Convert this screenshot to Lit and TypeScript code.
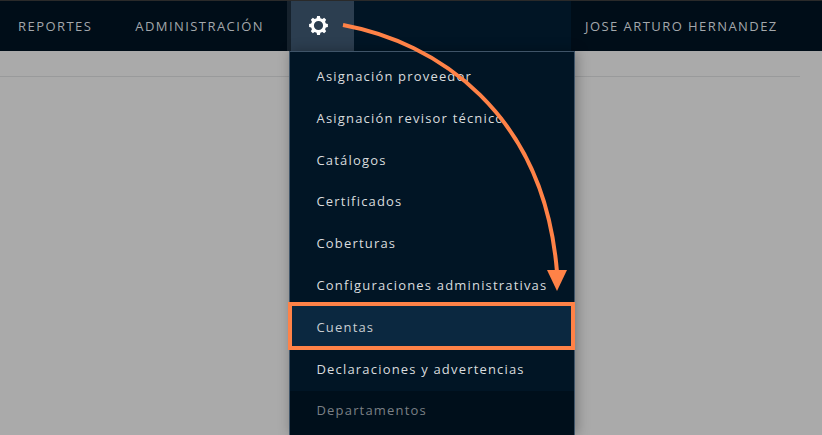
import { LitElement, html, css } from "lit";
import { customElement } from "lit/decorators.js";

const ITEMS = [
  "Asignación proveedor",
  "Asignación revisor técnico",
  "Catálogos",
  "Certificados",
  "Coberturas",
  "Configuraciones administrativas",
  "Cuentas",
  "Declaraciones y advertencias",
  "Departamentos",
];

function gearPath(teeth: number, outer: number, root: number, hole: number): string {
  const pts: string[] = [];
  const step = (Math.PI * 2) / teeth;
  for (let i = 0; i < teeth; i++) {
    const a = i * step - Math.PI / 2;
    const corners: [number, number][] = [
      [root, a - step * 0.32],
      [outer, a - step * 0.19],
      [outer, a + step * 0.19],
      [root, a + step * 0.32],
    ];
    for (const [r, t] of corners) {
      pts.push(`${(12 + r * Math.cos(t)).toFixed(2)} ${(12 + r * Math.sin(t)).toFixed(2)}`);
    }
  }
  return `M${pts.join("L")}ZM12 ${12 - hole}a${hole} ${hole} 0 1 0 0 ${hole * 2}a${hole} ${hole} 0 1 0 0 ${-hole * 2}Z`;
}

@customElement("app-root")
export class AppRoot extends LitElement {
  static styles = css`
    :host {
      display: block;
      position: relative;
      width: 822px;
      height: 435px;
      overflow: hidden;
      background: #aaaaaa;
      font-family: "Open Sans", sans-serif;
    }
    .bar {
      display: flex;
      height: 50px;
      border-top: 1px solid #2a2a2a;
      background: #000d18;
      color: #a3a7ab;
      font-size: 13px;
      font-weight: 400;
      letter-spacing: 1.44px;
    }
    .left {
      width: 287px;
      display: flex;
      gap: 43px;
      align-items: center;
      padding-left: 18px;
      box-sizing: border-box;
      padding-bottom: 1px;
    }
    .sep {
      width: 4px;
      background: #16222d;
    }
    .mid {
      width: 280px;
      background: #011525;
      display: flex;
    }
    .gear {
      width: 63px;
      background: #2c3e50;
      display: flex;
      align-items: center;
      padding-left: 18px;
      box-sizing: border-box;
    }
    .gear svg {
      width: 19px;
      height: 19px;
      display: block;
      margin-bottom: 1px;
    }
    .user {
      flex: 1;
      padding-left: 14px;
      display: flex;
      align-items: center;
      padding-bottom: 1px;
    }
    .rule {
      height: 1px;
      margin-top: 25px;
      width: 800px;
      background: #999a9b;
    }
    .menu {
      position: absolute;
      left: 289px;
      top: 51px;
      width: 286px;
      height: 384px;
      box-sizing: border-box;
      background: #011525;
      border: 1px solid #3f5468;
      border-bottom: none;
      box-shadow: 2px 0 12px rgba(0, 0, 0, 0.3);
      font-size: 13px;
      letter-spacing: 1.18px;
      color: #d9dcde;
      display: flex;
      flex-direction: column;
    }
    .item {
      height: 41.78px;
      flex: none;
      display: flex;
      align-items: center;
      padding-left: 26.5px;
      box-sizing: border-box;
      white-space: nowrap;
    }
    .item.first {
      margin-top: 3.3px;
    }
    .item.active {
      background: #0b2840;
      color: #c9ced2;
    }
    .item.dim {
      background: #000f1b;
      color: #7b8085;
      flex: 1;
      align-items: flex-start;
      margin-top: 1.5px;
      padding-top: 10px;
    }
    .overlay {
      position: absolute;
      left: 0;
      top: 0;
      width: 822px;
      height: 435px;
      pointer-events: none;
    }
  `;

  render() {
    return html`
      <div class="bar">
        <div class="left"><span>REPORTES</span><span>ADMINISTRACIÓN</span></div>
        <div class="sep"></div>
        <div class="mid">
          <div class="gear">
            <svg viewBox="0 0 24 24" fill="#fff">
              <path fill-rule="evenodd" d=${gearPath(8, 12, 9.6, 5.8)} />
            </svg>
          </div>
        </div>
        <div class="user">JOSE ARTURO HERNANDEZ</div>
      </div>
      <div class="rule"></div>
      <div class="menu">
        ${ITEMS.map(
          (t, i) =>
            html`<div
              class="item ${i === 0 ? "first" : ""} ${t === "Cuentas" ? "active" : ""} ${t === "Departamentos" ? "dim" : ""}"
            >
              ${t}
            </div>`
        )}
      </div>
      <svg class="overlay" viewBox="0 0 822 435">
        <rect x="290" y="304" width="283" height="44" fill="none" stroke="#ff8247" stroke-width="4" />
        <path d="M343 25C436 42 544 112 557 272" fill="none" stroke="#ff8247" stroke-width="4" />
        <path d="M547 270h20l-10 21z" fill="#ff8247" />
      </svg>
    `;
  }
}
